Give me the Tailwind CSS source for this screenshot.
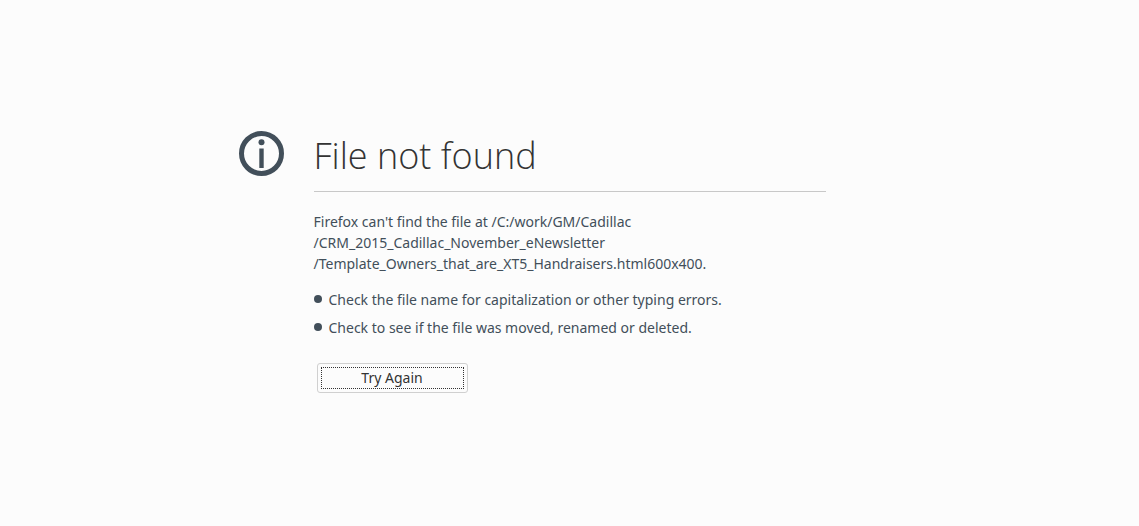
<!DOCTYPE html>
<html lang="en">
<head>
<meta charset="utf-8">
<title>File not found</title>
<meta name="viewport" content="width=device-width, initial-scale=1">
<script src="https://cdn.jsdelivr.net/npm/@tailwindcss/browser@4"></script>
</head>
<body class="flex min-h-screen items-center justify-center bg-[#fcfcfc] pb-[7px] font-['Noto_Sans','Open_Sans',sans-serif] text-sm text-[#424f5a]">
<main class="grid w-full max-w-[662px] grid-cols-[45px_minmax(0,1fr)_45px] gap-x-[30px]">
  <svg class="mt-1 size-[45px]" viewBox="0 0 45 45" fill="none" aria-hidden="true">
    <circle cx="22.500" cy="22.500" r="20" stroke="#424f5a" stroke-width="5"/>
    <circle cx="22.500" cy="11.200" r="3" fill="#424f5a"/>
    <path d="M20.300 17.500h4.400V37h-4.400z" fill="#424f5a"/>
  </svg>
  <div>
    <h1 class="border-b border-[#c8c8c8] pt-px pb-[7px] font-['Open_Sans','Noto_Sans',sans-serif] text-[36px] leading-[56px] font-light text-[#333]">File not found</h1>
    <p class="mt-[19px] leading-[21px]">Firefox can't find the file at /C:/work/GM/Cadillac<br>/CRM_2015_Cadillac_November_eNewsletter<br>/Template_Owners_that_are_XT5_Handraisers.html600x400.</p>
    <ul class="mt-[15px] space-y-[7px] leading-[21px]">
      <li class="flex items-center gap-[7px]"><span class="size-2 shrink-0 rounded-full bg-[#424f5a]"></span>Check the file name for capitalization or other typing errors.</li>
      <li class="flex items-center gap-[7px]"><span class="size-2 shrink-0 rounded-full bg-[#424f5a]"></span>Check to see if the file was moved, renamed or deleted.</li>
    </ul>
    <button type="button" class="mt-[25px] ml-[3px] flex h-[30px] w-[151px] rounded-[3px] border border-[#d0d0d0] p-[3px] text-[#333]"><span class="flex h-full w-full items-center justify-center border border-dotted border-[#333]">Try Again</span></button>
  </div>
</main>
</body>
</html>
